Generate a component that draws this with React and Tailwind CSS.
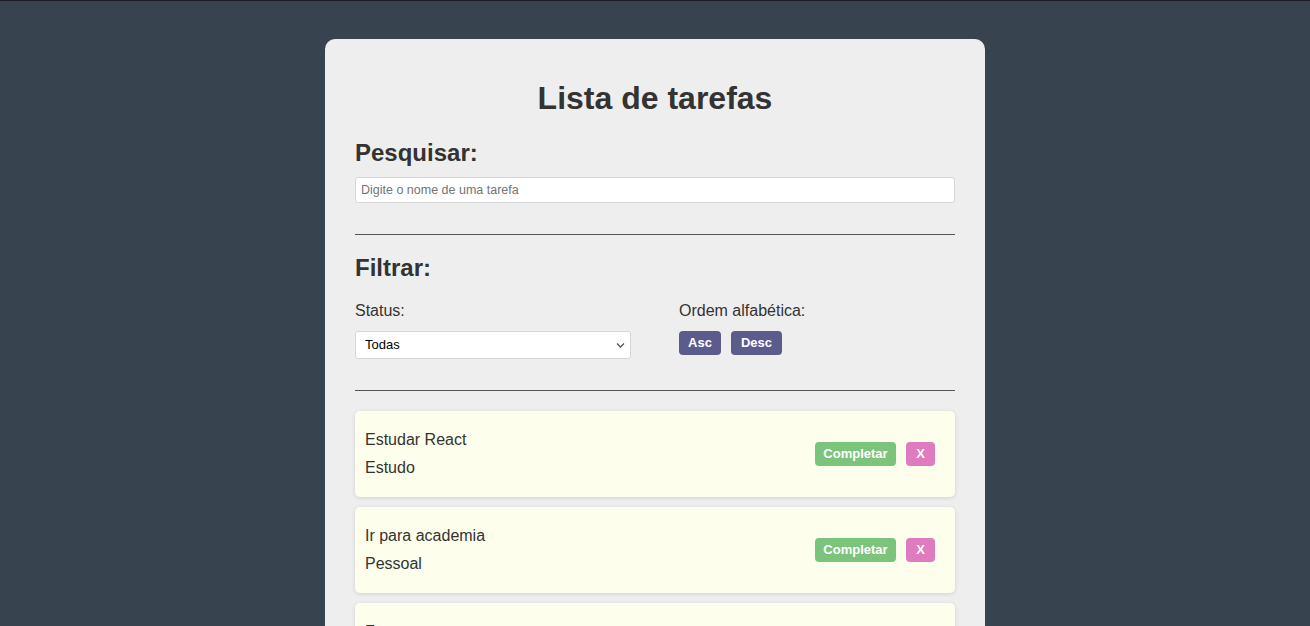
import React from "react";

const tasks = [
  { id: 1, text: "Estudar React", category: "Estudo" },
  { id: 2, text: "Ir para academia", category: "Pessoal" },
  { id: 3, text: "Fazer compras", category: "Pessoal" },
];

function Task({ task }) {
  return (
    <div className="flex items-center justify-between rounded-[5px] bg-[#fdffec] pl-[10px] pr-[20px] pt-[20px] pb-[20px] shadow-[0_1px_4px_rgba(0,0,0,0.12)]">
      <div className="flex flex-col gap-[10px] text-[16px] leading-[18px] text-[#333]">
        <p>{task.text}</p>
        <p>{task.category}</p>
      </div>
      <div className="flex gap-[10px]">
        <button className="h-[24px] w-[81px] rounded-[4px] bg-[#7cc47c] text-[13px] font-bold text-white">
          Completar
        </button>
        <button className="h-[24px] w-[29px] rounded-[4px] bg-[#e07bbf] text-[13px] font-bold text-white">
          X
        </button>
      </div>
    </div>
  );
}

export default function App() {
  return (
    <div className="min-h-screen border-t border-[#1c1c24] bg-[#37444f] pt-[38px] font-['Liberation_Sans',Arial,sans-serif] text-[#333]">
      <div className="mx-auto w-[660px] rounded-[10px] bg-[#eeeeee] px-[30px] pt-[41px] pb-[30px]">
        <h1 className="text-center text-[32px] font-bold leading-[37px]">
          Lista de tarefas
        </h1>

        <h2 className="mt-[22px] text-[24px] font-bold leading-[28px]">
          Pesquisar:
        </h2>
        <input
          type="text"
          placeholder="Digite o nome de uma tarefa"
          className="mt-[10px] block h-[26px] w-full rounded-[3px] border border-[#d6d6d6] bg-white px-[5px] text-[12.5px] text-black placeholder:text-[#757575] outline-none"
        />

        <hr className="mt-[31px] border-t border-[#555]" />

        <h2 className="mt-[19px] text-[24px] font-bold leading-[28px]">
          Filtrar:
        </h2>
        <div className="mt-[20px] flex">
          <div className="w-[324px]">
            <p className="text-[16px] leading-[18px]">Status:</p>
            <div className="relative mt-[11px] h-[28px] w-[276px]">
              <select className="h-full w-full appearance-none rounded-[3px] border border-[#d6d6d6] bg-white pl-[9px] text-[13px] text-black outline-none">
                <option>Todas</option>
                <option>Completas</option>
                <option>Incompletas</option>
              </select>
              <svg
                className="pointer-events-none absolute right-[6px] top-[11px]"
                width="9"
                height="7"
                viewBox="0 0 9 7"
                fill="none"
              >
                <path d="M1 1.5 L4.5 5 L8 1.5" stroke="#555" strokeWidth="1.3" />
              </svg>
            </div>
          </div>
          <div>
            <p className="text-[16px] leading-[18px]">Ordem alfabética:</p>
            <div className="mt-[11px] flex gap-[10px]">
              <button className="h-[24px] w-[42px] rounded-[4px] bg-[#5b5c8c] text-[13px] font-bold text-white">
                Asc
              </button>
              <button className="h-[24px] w-[51px] rounded-[4px] bg-[#5b5c8c] text-[13px] font-bold text-white">
                Desc
              </button>
            </div>
          </div>
        </div>

        <hr className="mt-[31px] border-t border-[#555]" />

        <div className="mt-[20px] flex flex-col gap-[10px]">
          {tasks.map((task) => (
            <Task key={task.id} task={task} />
          ))}
        </div>
      </div>
    </div>
  );
}
